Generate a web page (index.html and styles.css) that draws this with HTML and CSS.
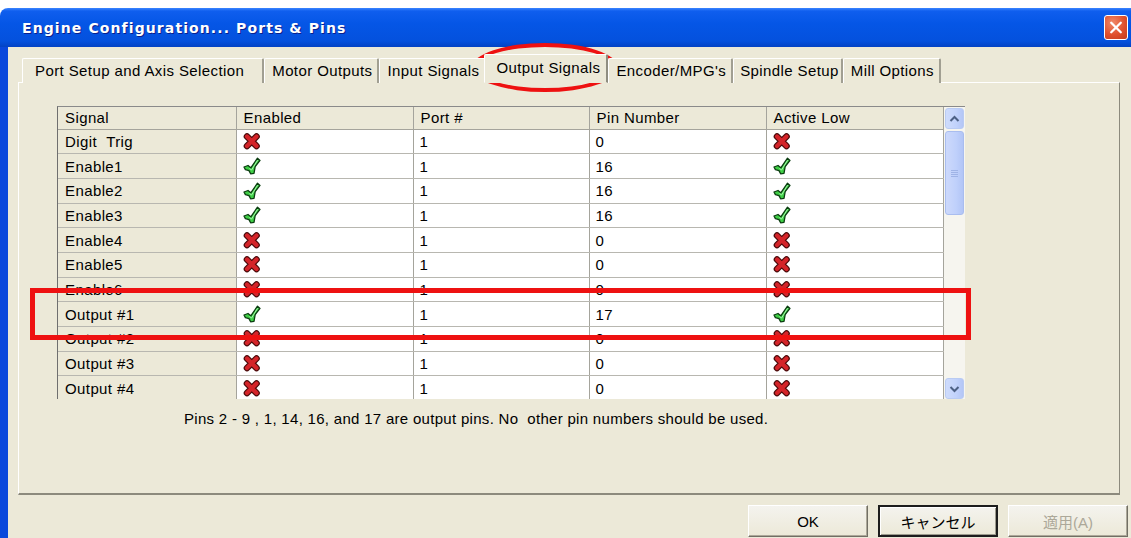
FILE: index.html
```html
<!DOCTYPE html>
<html lang="en">
<head>
<meta charset="utf-8">
<title>Engine Configuration... Ports &amp; Pins</title>
<link rel="stylesheet" href="styles.css">
</head>
<body>
<div class="window">
  <div class="titlebar">
    <span class="title">Engine Configuration... Ports &amp; Pins</span>
    <span class="close">
      <svg width="23" height="23" viewBox="0 0 23 23"><path d="M6.5 6.5 L16.5 16.5 M16.5 6.5 L6.5 16.5" stroke="#fff" stroke-width="2.4" stroke-linecap="round"/></svg>
    </span>
  </div>
  <div class="client">
    <div class="tabstrip">
      <span class="tab first">Port Setup and Axis Selection</span>
      <span class="tab">Motor Outputs</span>
      <span class="tab">Input Signals</span>
      <span class="tab active">Output Signals</span>
      <span class="tab">Encoder/MPG's</span>
      <span class="tab narrow">Spindle Setup</span>
      <span class="tab">Mill Options</span>
    </div>
    <div class="panel">
      <div class="grid-wrap">
        <table class="grid">
          <colgroup>
            <col class="c1"><col class="c2"><col class="c3"><col class="c4"><col class="c5">
          </colgroup>
          <thead>
            <tr><th>Signal</th><th>Enabled</th><th>Port #</th><th>Pin Number</th><th>Active Low</th></tr>
          </thead>
          <tbody id="rows"></tbody>
        </table>
        <div class="vscroll">
          <span class="sbtn up"><svg width="11" height="8" viewBox="0 0 11 8"><path d="M1.5 6 L5.5 2 L9.5 6" fill="none" stroke="#4d6185" stroke-width="2"/></svg></span>
          <span class="thumb"><i></i><i></i><i></i><i></i></span>
          <span class="track"></span>
          <span class="sbtn down"><svg width="11" height="8" viewBox="0 0 11 8"><path d="M1.5 2 L5.5 6 L9.5 2" fill="none" stroke="#4d6185" stroke-width="2"/></svg></span>
        </div>
      </div>
      <p class="note">Pins 2 - 9 , 1, 14, 16, and 17 are output pins. No&nbsp; other pin numbers should be used.</p>
    </div>
    <div class="buttons">
      <button class="btn">OK</button>
      <button class="btn default">キャンセル</button>
      <button class="btn" disabled>適用(<u>A</u>)</button>
    </div>
  </div>
  <div class="mark ring"></div>
  <div class="mark box"></div>
</div>
<script src="app.js"></script>
</body>
</html>
```
FILE: app.js
```js
// Output signal rows: name, enabled, port, pin, active low
const signals = [
  ["Digit  Trig", false, 1, 0, false],
  ["Enable1", true, 1, 16, true],
  ["Enable2", true, 1, 16, true],
  ["Enable3", true, 1, 16, true],
  ["Enable4", false, 1, 0, false],
  ["Enable5", false, 1, 0, false],
  ["Enable6", false, 1, 0, false],
  ["Output #1", true, 1, 17, true],
  ["Output #2", false, 1, 0, false],
  ["Output #3", false, 1, 0, false],
  ["Output #4", false, 1, 0, false]
];

const yes = '<svg class="ico" width="18" height="18" viewBox="0 0 18 18"><path d="M1 10 L5 8.5 L7.8 10.8 L14.5 1.2 L17 3.4 L12.2 9.5 L11 16.4 L7.6 16.8 L6 13.6 L2.4 12.6 Z" fill="#3fcf46" stroke="#0b3d10" stroke-width="1.3" stroke-linejoin="round"/><path d="M6.5 11.5 L8.6 13 L14.6 3.2" fill="none" stroke="#a4f4aa" stroke-width="1"/></svg>';
const no = '<svg class="ico" width="18" height="17" viewBox="0 0 18 17"><path d="M4 3.5 L13.5 13 M13.5 3.5 L4 13" stroke="#4a0a0a" stroke-width="6.6" stroke-linecap="round"/><path d="M4 3.5 L13.5 13 M13.5 3.5 L4 13" stroke="#d42429" stroke-width="4.2" stroke-linecap="round"/></svg>';

const tbody = document.getElementById("rows");
tbody.innerHTML = signals.map(([name, en, port, pin, low]) =>
  `<tr><td class="name">${name.replace(/ /g, "&nbsp;")}</td><td>${en ? yes : no}</td><td>${port}</td><td>${pin}</td><td>${low ? yes : no}</td></tr>`
).join("");
```
FILE: styles.css
```css
* { box-sizing: border-box; }

html, body {
  margin: 0;
  padding: 0;
  background: #fff;
  width: 1131px;
  height: 538px;
  overflow: hidden;
  font-family: "Liberation Sans", Arial, sans-serif;
  font-size: 15px;
  letter-spacing: 0.4px;
  color: #000;
}

.window {
  position: relative;
  margin-top: 8px;
  height: 530px;
  display: flex;
  flex-direction: column;
}

/* XP caption bar */
.titlebar {
  height: 39px;
  border-top-left-radius: 8px;
  background: linear-gradient(#3a84ff 0, #0f5eee 8%, #0556e6 40%, #0451dd 85%, #0342c4 100%);
  display: flex;
  align-items: center;
  justify-content: space-between;
  padding-left: 22px;
  padding-right: 3px;
}

.title {
  color: #fff;
  font-family: "DejaVu Sans", sans-serif;
  font-weight: bold;
  font-size: 14px;
  letter-spacing: 1.1px;
  text-shadow: 1px 1px 0 #0a1f8c;
}

.close {
  width: 24px;
  height: 25px;
  border: 1px solid #fff;
  border-radius: 3px;
  background: radial-gradient(circle at 35% 30%, #f08a6a, #e0502c 55%, #c33a1c);
  display: flex;
  align-items: center;
  justify-content: center;
}

.client {
  flex: 1;
  background: #ece9d8;
  border-left: 8px solid #0a48dc;
  padding: 6px 0 0 10px;
  display: flex;
  flex-direction: column;
}

/* tab strip */
.tabstrip {
  display: flex;
  align-items: flex-end;
  height: 30px;
  padding-left: 4px;
  position: relative;
  z-index: 1;
  letter-spacing: 0.4px;
}

.tab {
  height: 25px;
  line-height: 24px;
  padding: 0 5px 0 7px;
  border-top: 1px solid #fff;
  border-left: 1px solid #fff;
  border-right: 2px solid #a19f92;
  border-radius: 2px 2px 0 0;
  background: #ece9d8;
  white-space: nowrap;
}

.tab.first { padding: 0 18px 0 12px; }
.tab.narrow { padding: 0 2px 0 6px; }

.tab.active {
  height: 29px;
  line-height: 26px;
  margin-left: -2px;
  padding: 0 6px 0 11px;
  border-right: 2px solid #8f8d80;
  border-bottom: 1px solid #ece9d8;
}

.panel {
  width: 1102px;
  height: 413px;
  margin-top: -1px;
  border-top: 1px solid #fff;
  border-left: 1px solid #fff;
  border-right: 1px solid #8c8a7d;
  border-bottom: 2px solid #8c8a7d;
  padding: 23px 0 0 38px;
}

/* signal grid */
.grid-wrap {
  display: flex;
  height: 293px;
  width: 908px;
  overflow: hidden;
  border-top: 1px solid #8a8a8a;
  border-left: 1px solid #6f6f6f;
}

.grid {
  border-collapse: collapse;
  table-layout: fixed;
  width: 885px;
  background: #fff;
  align-self: flex-start;
}

.c1 { width: 178px; }
.c2 { width: 177px; }
.c3 { width: 176px; }
.c4 { width: 177px; }
.c5 { width: 177px; }

.grid th {
  height: 22px;
  background: #ece9d8;
  font-weight: normal;
  text-align: left;
  padding: 0 7px;
  border-right: 1px solid #a5a49c;
  border-bottom: 1px solid #a5a49c;
}

.grid td {
  height: 24.7px;
  padding: 0 6px;
  border-right: 1px solid #a5a49c;
  border-bottom: 1px solid #b8b7b0;
  white-space: nowrap;
  vertical-align: middle;
}

.grid td.name {
  background: #ece9d8;
  padding-left: 7px;
}

.ico { display: block; }

/* XP scroll bar */
.vscroll {
  width: 23px;
  display: flex;
  flex-direction: column;
  background: #f6f5ef;
  padding: 1px 1px 0 1px;
}

.sbtn {
  height: 21px;
  border: 1px solid #b9cbf3;
  border-radius: 3px;
  background: linear-gradient(90deg, #cfdcfc, #c1d2fb 60%, #b4c6f6);
  display: flex;
  align-items: center;
  justify-content: center;
}

.thumb {
  height: 84px;
  margin-top: 2px;
  border: 1px solid #a9bdef;
  border-radius: 3px;
  background: linear-gradient(90deg, #cdd9fb, #bfd0fb 60%, #b2c5f6);
  display: flex;
  flex-direction: column;
  align-items: center;
  justify-content: center;
  gap: 1px;
}

.thumb i {
  display: block;
  width: 7px;
  height: 1px;
  background: #eef3ff;
  border-bottom: 1px solid #9fb3e6;
}

.track { flex: 1; }

.note {
  margin: 11px 0 0 127px;
  letter-spacing: 0.3px;
}

/* dialog buttons */
.buttons {
  display: flex;
  justify-content: flex-end;
  gap: 10px;
  padding: 10px 3px 0 0;
  width: 1113px;
}

.btn {
  width: 120px;
  height: 32px;
  font-family: "Liberation Sans", "Noto Sans CJK JP", sans-serif;
  font-size: 15px;
  background: linear-gradient(#f4f3ee, #ece9d8);
  border: 1px solid;
  border-color: #fff #716f64 #716f64 #fff;
  box-shadow: inset -1px -1px 0 #aca899;
  color: #000;
  padding: 0;
}

.btn.default {
  border: 2px solid #1d1d1d;
  box-shadow: inset 1px 1px 0 #fff, inset -1px -1px 0 #9c9a8d;
}

.btn[disabled] { color: #aca899; }
.btn u { text-decoration: none; }

/* red highlight marks drawn over the dialog */
.mark {
  position: absolute;
  border: 5px solid #ee1111;
  pointer-events: none;
}

.ring {
  left: 472px;
  top: 35px;
  width: 146px;
  height: 49px;
  border-radius: 50%;
  border-width: 4px;
}

.box {
  left: 30px;
  top: 280px;
  width: 941px;
  height: 52px;
}
```
